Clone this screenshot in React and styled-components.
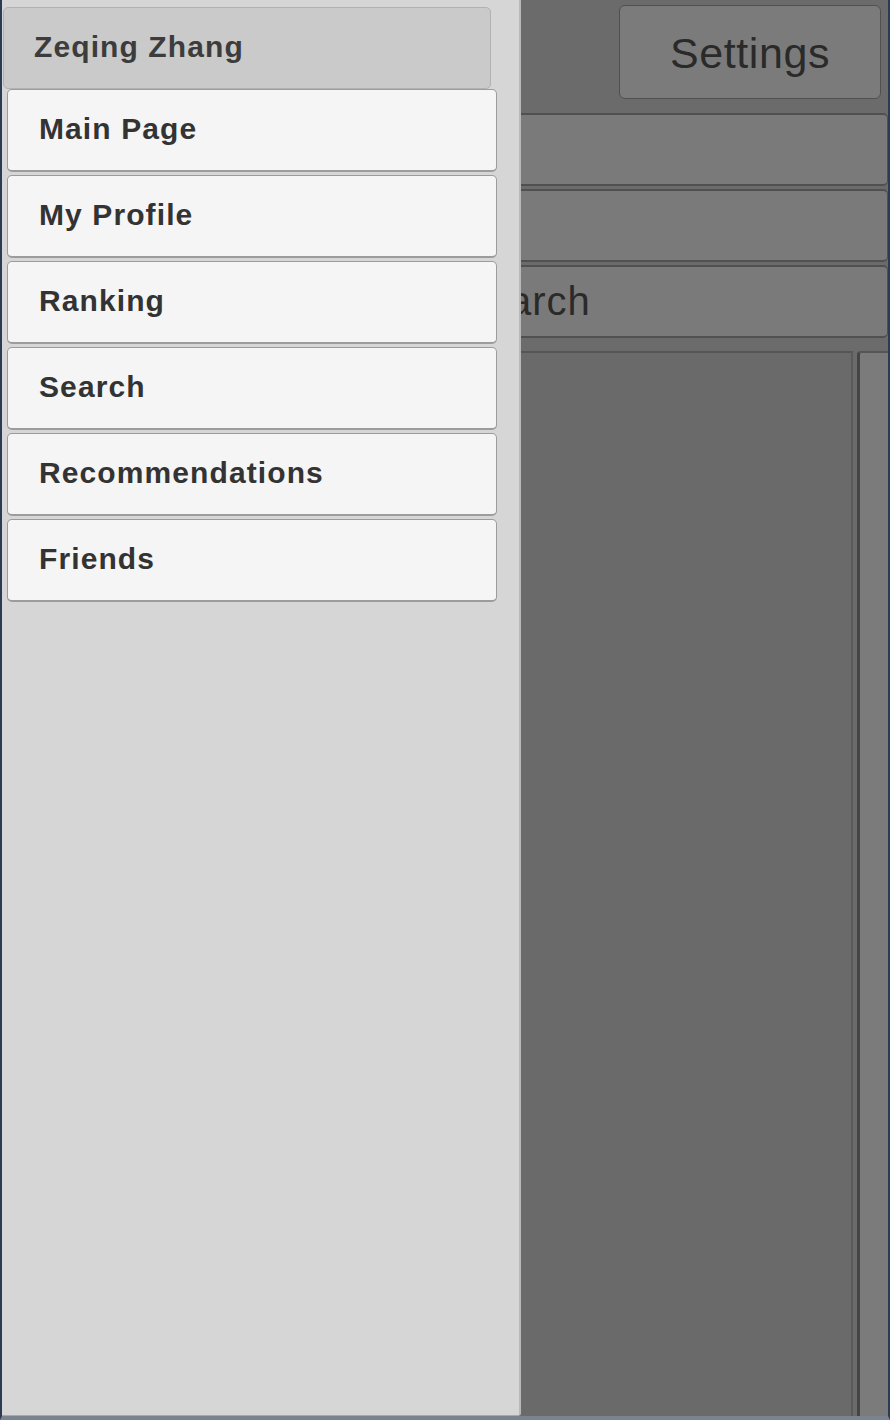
import React from "react";
import styled, { createGlobalStyle } from "styled-components";

const Global = createGlobalStyle`
  html, body { margin: 0; padding: 0; background: #6b6b6b; overflow: hidden; }
  * { box-sizing: border-box; }
`;

const Screen = styled.div`
  position: relative;
  width: 890px;
  height: 1420px;
  background: #6b6b6b;
  border-left: 2px solid #2c3a52;
  border-right: 2px solid #2c3a52;
  border-bottom: 4px solid #7c8390;
  font-family: "Liberation Sans", Arial, sans-serif;
  overflow: hidden;
`;

const Backdrop = styled.div`
  display: flex;
  flex-direction: column;
  height: 100%;
`;

const TopBar = styled.div`
  display: flex;
  justify-content: flex-end;
  padding: 5px 7px 0 0;
  height: 113px;
`;

const SettingsButton = styled.div`
  width: 262px;
  height: 94px;
  background: #7b7b7b;
  border: 1px solid #505050;
  border-radius: 6px;
  display: flex;
  align-items: center;
  justify-content: center;
  font-size: 43px;
  letter-spacing: 0.6px;
  color: #2a2a2a;
  padding-top: 2px;
`;

const Rows = styled.div`
  display: flex;
  flex-direction: column;
  gap: 3px;
  padding: 0 0 0 10px;
`;

const Row = styled.div`
  height: 73px;
  background: #7a7a7a;
  border: 2px solid #505050;
  border-right-width: 1px;
  border-radius: 5px;
  display: flex;
  align-items: center;
  padding-left: 444px;
  font-size: 40px;
  letter-spacing: 1px;
  color: #2a2a2a;
`;

const Content = styled.div`
  flex: 1;
  display: flex;
  gap: 4px;
  margin-top: 13px;
  padding-left: 10px;
`;

const ListArea = styled.div`
  flex: 1;
  background: #6a6a6a;
  border-top: 2px solid #555;
  border-right: 2px solid #5a5a5a;
`;

const ScrollBar = styled.div`
  width: 31px;
  background: #7b7b7b;
  border-top: 2px solid #555;
  border-left: 3px solid #444;
  border-radius: 4px 0 0 0;
`;

const Drawer = styled.div`
  position: absolute;
  left: 0;
  top: 0;
  bottom: 0;
  width: 519px;
  background: #d6d6d6;
  border-right: 2px solid #b9b9b9;
  border-bottom: 1px solid #a9a9a9;
  border-radius: 0 0 3px 0;
  display: flex;
  flex-direction: column;
  padding-top: 7px;
`;

const Header = styled.div`
  margin-left: 1px;
  width: 488px;
  height: 82px;
  background: #cacaca;
  border: 1px solid #b2b2b2;
  border-radius: 5px;
  display: flex;
  align-items: center;
  padding-left: 30px;
  padding-bottom: 2px;
  font-size: 30px;
  font-weight: 700;
  letter-spacing: 1.1px;
  color: #3c3c3c;
`;

const Menu = styled.div`
  display: flex;
  flex-direction: column;
  gap: 3px;
  margin-left: 5px;
`;

const MenuItem = styled.div`
  width: 490px;
  height: 83px;
  background: #f5f5f5;
  border: 1px solid #9c9c9c;
  border-bottom-width: 2px;
  border-radius: 5px;
  display: flex;
  align-items: center;
  padding-left: 31px;
  padding-bottom: 2px;
  font-size: 30px;
  font-weight: 700;
  letter-spacing: 1.1px;
  color: #333333;
`;

const items = ["Main Page", "My Profile", "Ranking", "Search", "Recommendations", "Friends"];

export default function App() {
  return (
    <>
      <Global />
      <Screen>
        <Backdrop>
          <TopBar>
            <SettingsButton>Settings</SettingsButton>
          </TopBar>
          <Rows>
            <Row />
            <Row />
            <Row>Search</Row>
          </Rows>
          <Content>
            <ListArea />
            <ScrollBar />
          </Content>
        </Backdrop>
        <Drawer>
          <Header>Zeqing Zhang</Header>
          <Menu>
            {items.map((t) => (
              <MenuItem key={t}>{t}</MenuItem>
            ))}
          </Menu>
        </Drawer>
      </Screen>
    </>
  );
}
